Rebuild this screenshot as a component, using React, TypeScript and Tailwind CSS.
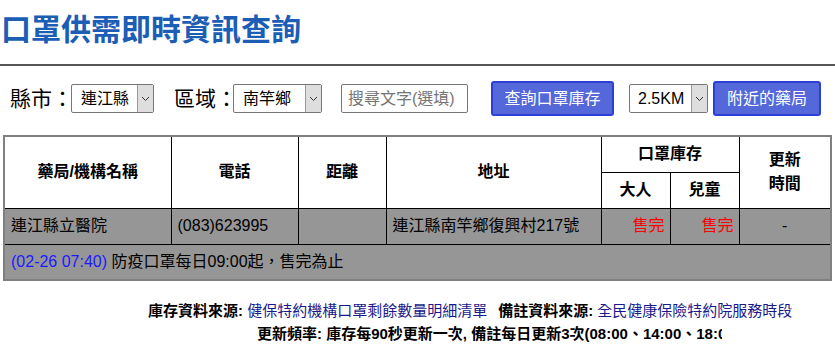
const font = "font-['Liberation_Sans','Noto_Sans_CJK_TC',sans-serif]";

function Chevron() {
  return (
    <svg width="9" height="6" viewBox="0 0 9 6" fill="none">
      <polyline points="1,1 4.5,4.5 8,1" stroke="#333" strokeWidth="1" />
    </svg>
  );
}

function FakeSelect({ value, width, pad }: { value: string; width: string; pad: string }) {
  return (
    <div className={`flex h-[29px] ${width} items-stretch rounded-[2px] border border-[#767676] bg-white`}>
      <div className={`flex flex-1 items-center ${pad} text-[16px] text-black`}>{value}</div>
      <div className="flex w-[16px] items-center justify-center border-l border-[#999] bg-[#dedede]">
        <Chevron />
      </div>
    </div>
  );
}

export default function App() {
  return (
    <div className={`${font} h-[348px] w-[835px] overflow-hidden bg-white text-black`}>
      <h1 className="pl-[1px] pt-[15px] text-[30px] font-bold leading-none text-[#1c5db6]">
        口罩供需即時資訊查詢
      </h1>
      <div className="mt-[19px] h-[2px] bg-[#555]" />

      <div className="mt-[15px] flex h-[35px] items-center">
        <span className="ml-[10px] w-[61px] whitespace-nowrap text-[21px] leading-none">縣市：</span>
        <FakeSelect value="連江縣" width="w-[83px]" pad="pl-[9px]" />
        <span className="ml-[20px] w-[59px] whitespace-nowrap text-[21px] leading-none">區域：</span>
        <FakeSelect value="南竿鄉" width="w-[89px]" pad="pl-[9px]" />
        <div className="ml-[19px] flex h-[29px] w-[127px] items-center rounded-[2px] border border-[#767676] pl-[6px] text-[16px] text-[#757575]">
          搜尋文字(選填)
        </div>
        <button className="ml-[23px] h-[35px] w-[123px] rounded-[3px] border-2 border-[#2b3fd6] bg-[#5468d9] text-[16px] text-white">
          查詢口罩庫存
        </button>
        <div className="ml-[15px]">
          <FakeSelect value="2.5KM" width="w-[79px]" pad="pl-[8px]" />
        </div>
        <button className="ml-[5px] h-[35px] w-[108px] rounded-[3px] border-2 border-[#2b3fd6] bg-[#5468d9] text-[16px] text-white">
          附近的藥局
        </button>
      </div>

      <table className="ml-[3px] mt-[19px] w-[827px] table-fixed border-collapse border-2 border-[#808080] text-[16px]">
        <colgroup>
          <col className="w-[167px]" />
          <col className="w-[127px]" />
          <col className="w-[88px]" />
          <col className="w-[215px]" />
          <col className="w-[69px]" />
          <col className="w-[69px]" />
          <col className="w-[92px]" />
        </colgroup>
        <thead>
          <tr className="h-[36px] bg-white">
            <th rowSpan={2} className="border border-black font-bold">藥局/機構名稱</th>
            <th rowSpan={2} className="border border-black font-bold">電話</th>
            <th rowSpan={2} className="border border-black font-bold">距離</th>
            <th rowSpan={2} className="border border-black font-bold">地址</th>
            <th colSpan={2} className="border border-black font-bold">口罩庫存</th>
            <th rowSpan={2} className="border border-black font-bold leading-[24px]">
              更新
              <br />
              時間
            </th>
          </tr>
          <tr className="h-[36px] bg-white">
            <th className="border border-black font-bold">大人</th>
            <th className="border border-black font-bold">兒童</th>
          </tr>
        </thead>
        <tbody>
          <tr className="h-[36px] bg-[#969696]">
            <td className="border border-black px-[6px]">連江縣立醫院</td>
            <td className="border border-black px-[6px]">(083)623995</td>
            <td className="border border-black px-[6px]"></td>
            <td className="border border-black px-[6px]">連江縣南竿鄉復興村217號</td>
            <td className="border border-black px-[5px] text-right text-[#ff0000]">售完</td>
            <td className="border border-black px-[5px] text-right text-[#ff0000]">售完</td>
            <td className="border border-black text-center">-</td>
          </tr>
          <tr className="h-[36px] bg-[#969696]">
            <td colSpan={7} className="border border-black px-[6px]">
              <span className="text-[#1a1aff]">(02-26 07:40)</span> 防疫口罩每日09:00起，售完為止
            </td>
          </tr>
        </tbody>
      </table>

      <div className="mt-[18px] text-[15px] leading-[23px]">
        <div className="whitespace-nowrap pl-[148px]">
          <span className="font-bold">庫存資料來源: </span>
          <span className="text-[#1a1a8c]">健保特約機構口罩剩餘數量明細清單</span>
          <span className="ml-[11px] font-bold">備註資料來源: </span>
          <span className="text-[#1a1a8c]">全民健康保險特約院服務時段</span>
        </div>
        <div className="ml-[257px] w-[465px] overflow-hidden whitespace-nowrap font-bold">
          更新頻率: 庫存每90秒更新一次, 備註每日更新3次(08:00、14:00、18:00)
        </div>
      </div>
    </div>
  );
}
